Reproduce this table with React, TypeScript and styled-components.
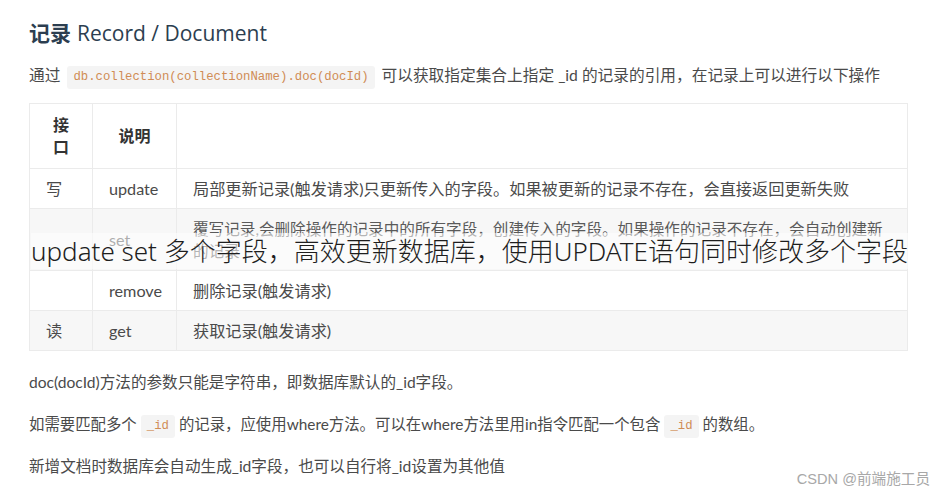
import React from "react";
import styled, { createGlobalStyle } from "styled-components";

const GlobalStyle = createGlobalStyle`
  html, body { margin: 0; padding: 0; background: #ffffff; }
  body { font-family: Lato, "Noto Sans CJK SC", sans-serif; }
`;

const Page = styled.div`
  position: relative;
  width: 938px;
  height: 490px;
  box-sizing: border-box;
  padding: 17px 30px 0 29px;
  overflow: hidden;
  color: #4a4a4a;
`;

const Title = styled.h2`
  margin: 0;
  font-size: 21px;
  line-height: 30px;
  font-weight: 500;
  color: #2c3e50;
  font-family: "Open Sans", "Noto Sans CJK SC", sans-serif;
`;

const TitleCn = styled.span`
  font-weight: 700;
  font-family: "Noto Sans CJK SC", sans-serif;
  margin-right: 6px;
`;

const Para = styled.p<{ $top: number; $size?: number }>`
  margin: ${(p) => p.$top}px 0 0;
  font-size: ${(p) => p.$size ?? 15.6}px;
  line-height: 28px;
  color: #4a4a4a;
  white-space: nowrap;
`;

const Code = styled.code<{ $space?: number }>`
  display: inline-block;
  font-family: "Liberation Mono", monospace;
  font-size: 12.3px;
  line-height: 23px;
  padding: 0 6px;
  margin: 0 ${(p) => p.$space ?? 5}px;
  background: #f4f4f4;
  color: #d08c55;
  border-radius: 3px;
  vertical-align: 1px;
`;

const TableWrap = styled.div`
  position: relative;
  margin-top: 14px;
  width: 879px;
`;

const Table = styled.table`
  width: 879px;
  border-collapse: collapse;
  table-layout: fixed;
  font-size: 16.2px;
  color: #4a4a4a;
`;

const Col = styled.col<{ $w?: number }>`
  width: ${(p) => (p.$w ? `${p.$w}px` : "auto")};
`;

const HeadCell = styled.th`
  border: 1px solid #ebebeb;
  padding: 10px 16px;
  line-height: 22px;
  font-weight: 700;
  font-size: 16px;
  color: #333;
  text-align: center;
  background: #ffffff;
`;

const Row = styled.tr`
  background: #ffffff;
  &:nth-child(2n) {
    background: #f7f7f7;
  }
`;

const Cell = styled.td`
  border: 1px solid #ebebeb;
  padding: 8.5px 16px;
  line-height: 22px;
  vertical-align: middle;
`;

const SmallCell = styled(Cell)`
  font-size: 15.6px;
  color: #5a5a5a;
`;

const Overlay = styled.div`
  position: absolute;
  left: 2px;
  top: 130px;
  width: 878px;
  height: 36px;
  display: flex;
  align-items: center;
  background: rgba(255, 255, 255, 0.55);
  font-family: "Noto Sans", "Noto Sans CJK SC", sans-serif;
  font-weight: 300;
  font-size: 26px;
  line-height: 36px;
  color: #1e1e1e;
  white-space: nowrap;
`;

const Watermark = styled.div`
  position: absolute;
  right: 8px;
  bottom: 2px;
  font-family: "Liberation Sans", "Noto Sans CJK SC", sans-serif;
  font-size: 14.6px;
  color: #a8a8a8;
`;

const rows = [
  { op: "写", name: "update", desc: "局部更新记录(触发请求)只更新传入的字段。如果被更新的记录不存在，会直接返回更新失败" },
  { op: "", name: "set", desc: "覆写记录,会删除操作的记录中的所有字段，创建传入的字段。如果操作的记录不存在，会自动创建新的记录", small: true },
  { op: "", name: "remove", desc: "删除记录(触发请求)" },
  { op: "读", name: "get", desc: "获取记录(触发请求)" },
];

export default function App() {
  return (
    <>
      <GlobalStyle />
      <Page>
        <Title>
          <TitleCn>记录</TitleCn>Record / Document
        </Title>
        <Para $top={13} $size={15.7}>
          通过<Code $space={7}>db.collection(collectionName).doc(docId)</Code>可以获取指定集合上指定 _id 的记录的引用，在记录上可以进行以下操作
        </Para>
        <TableWrap>
          <Table>
            <colgroup>
              <Col $w={63} />
              <Col $w={84} />
              <Col />
            </colgroup>
            <thead>
              <tr>
                <HeadCell>接口</HeadCell>
                <HeadCell>说明</HeadCell>
                <HeadCell></HeadCell>
              </tr>
            </thead>
            <tbody>
              {rows.map((r) => (
                <Row key={r.name}>
                  <Cell>{r.op}</Cell>
                  <Cell>{r.name}</Cell>
                  {r.small ? <SmallCell>{r.desc}</SmallCell> : <Cell>{r.desc}</Cell>}
                </Row>
              ))}
            </tbody>
          </Table>
          <Overlay>update set 多个字段，高效更新数据库，使用UPDATE语句同时修改多个字段</Overlay>
        </TableWrap>
        <Para $top={17}>doc(docId)方法的参数只能是字符串，即数据库默认的_id字段。</Para>
        <Para $top={14} $size={15.4}>
          如需要匹配多个<Code $space={4}>_id</Code>的记录，应使用where方法。可以在where方法里用in指令匹配一个包含<Code $space={4}>_id</Code>的数组。
        </Para>
        <Para $top={14}>新增文档时数据库会自动生成_id字段，也可以自行将_id设置为其他值</Para>
        <Watermark>CSDN @前端施工员</Watermark>
      </Page>
    </>
  );
}
